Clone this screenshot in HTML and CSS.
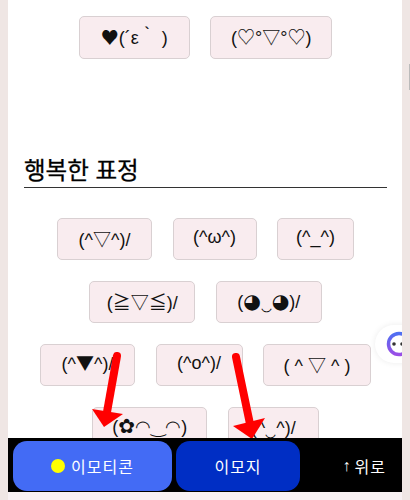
FILE: index.html
```html
<!DOCTYPE html>
<html lang="ko">
  <head>
    <meta charset="UTF-8" />
    <meta name="viewport" content="width=device-width, initial-scale=1.0" />
    <title>이모티콘</title>
    <link rel="stylesheet" href="styles.css">
  </head>
  <body>
    <div class="page">
      <div class="emoticons first">
        <button class="emo w111"><span class="sym-cjk">♥</span>(´ε｀&nbsp;)</button>
        <button class="emo w122">(♡°▽°♡)</button>
      </div>

      <h2 class="section-title">행복한 표정</h2>
      <div class="emoticons">
        <button class="emo w95">(^▽^)/</button>
        <button class="emo w84">(^ω^)</button>
        <button class="emo w77">(^_^)</button>
        <button class="emo w106">(≧▽≦)/</button>
        <button class="emo w106">(<span class="sym">◕</span>‿<span class="sym">◕</span>)/</button>
        <button class="emo w95">(^<span class="sym-cjk">▼</span>^)/</button>
        <button class="emo w87">(^o^)/</button>
        <button class="emo w108">( ^ ▽ ^ )</button>
        <button class="emo w115">(<span class="sym">✿</span>◠‿◠)</button>
        <button class="emo w91">(^‿^)/</button>
      </div>

      <div class="helper">
        <svg width="28" height="28" viewBox="0 0 28 28">
          <defs>
            <linearGradient id="ring" x1="0" y1="0" x2="0" y2="1">
              <stop offset="0" stop-color="#4f6ff2" />
              <stop offset="1" stop-color="#9a4ee6" />
            </linearGradient>
          </defs>
          <circle cx="14" cy="14" r="10.5" fill="#fff" stroke="url(#ring)" stroke-width="3.5" />
          <circle cx="9" cy="14" r="1.8" fill="#333" />
          <circle cx="17" cy="14" r="1.8" fill="#333" />
        </svg>
      </div>

      <svg class="arrows" width="410" height="500" viewBox="0 0 410 500">
        <path d="M117 356 L107 412" stroke="#f00" stroke-width="8" stroke-linecap="round" />
        <path d="M92 409 L123 414 L104 427 Z" fill="#f00" />
        <path d="M236 357 L250 424" stroke="#f00" stroke-width="8" stroke-linecap="round" />
        <path d="M233 426 L265 418 L252 439 Z" fill="#f00" />
      </svg>

      <nav class="bottom-bar">
        <a class="tab tab-emoticon"><span class="dot"></span>이모티콘</a>
        <a class="tab tab-emoji">이모지</a>
        <a class="top-link"><span class="up">↑</span>위로</a>
      </nav>
    </div>
    <div class="scroll-mark"></div>
  </body>
</html>
```

FILE: styles.css
```css
body {
  margin: 0;
  height: 500px;
  overflow: hidden;
  background-color: #efe6e4;
  font-family: "Liberation Sans", "Noto Sans CJK KR", sans-serif;
}
.page {
  position: relative;
  margin: 0 8px;
  height: 500px;
  padding: 0 15px 0 16px;
  box-sizing: border-box;
  background-color: white;
  overflow: hidden;
}
.emoticons {
  display: flex;
  flex-wrap: wrap;
  justify-content: center;
  gap: 20.5px;
  padding: 0 12px;
}
.emoticons.first {
  padding-top: 16px;
}
.emo {
  height: 42.5px;
  padding: 0 0 2px;
  font-family: "Liberation Sans", "Noto Sans CJK KR", sans-serif;
  font-size: 18px;
  color: #111;
  background-color: #f9ecef;
  border: 1px solid #d9d0d2;
  border-radius: 5px;
}
.w77 { width: 77px; }
.w84 { width: 84px; }
.w87 { width: 87px; }
.w91 { width: 91px; }
.w95 { width: 95px; }
.w106 { width: 106px; }
.w108 { width: 108px; }
.w111 { width: 111px; }
.w115 { width: 115px; }
.w122 { width: 122px; }
.sym {
  font-family: "DejaVu Sans", sans-serif;
  font-size: 20px;
  line-height: 1;
}
.sym-cjk {
  font-family: "Noto Sans CJK KR", sans-serif;
  line-height: 1;
}
.section-title {
  margin: 97px 0 30px;
  font-size: 23.5px;
  font-weight: 400;
  -webkit-text-stroke: 0.3px black;
  line-height: 31px;
  color: black;
  border-bottom: 1px solid #333;
}
.bottom-bar {
  position: fixed;
  left: 8px;
  right: 8px;
  top: 438px;
  height: 62px;
  z-index: 3;
  display: flex;
  gap: 4px;
  padding: 3px 5px 0;
  box-sizing: border-box;
  background-color: black;
  border-bottom: 8px solid #f8f1f3;
}
.tab {
  display: flex;
  align-items: center;
  justify-content: center;
  gap: 6px;
  height: 50px;
  border-radius: 14px;
  font-size: 16px;
  letter-spacing: 1px;
  color: white;
}
.tab-emoticon {
  width: 159px;
  background-color: #436bf5;
}
.tab-emoji {
  width: 124px;
  background-color: #002ec4;
}
.dot {
  width: 14px;
  height: 14px;
  border-radius: 50%;
  background-color: #ffff00;
}
.top-link {
  flex: 1;
  display: flex;
  align-items: center;
  justify-content: flex-end;
  gap: 3px;
  height: 50px;
  padding-right: 11px;
  font-size: 16px;
  letter-spacing: 1px;
  color: white;
}
.helper {
  position: absolute;
  left: 367px;
  top: 325px;
  width: 50px;
  height: 38px;
  padding: 5px 0 0 10px;
  box-sizing: border-box;
  border-radius: 19px;
  background-color: white;
  box-shadow: 0 0 6px rgba(0, 0, 0, 0.08);
}
.arrows {
  position: fixed;
  left: 0;
  top: 0;
  z-index: 2;
}
.scroll-mark {
  position: fixed;
  left: 409px;
  top: 64px;
  width: 1px;
  height: 26px;
  background-color: #bbb;
}
```
